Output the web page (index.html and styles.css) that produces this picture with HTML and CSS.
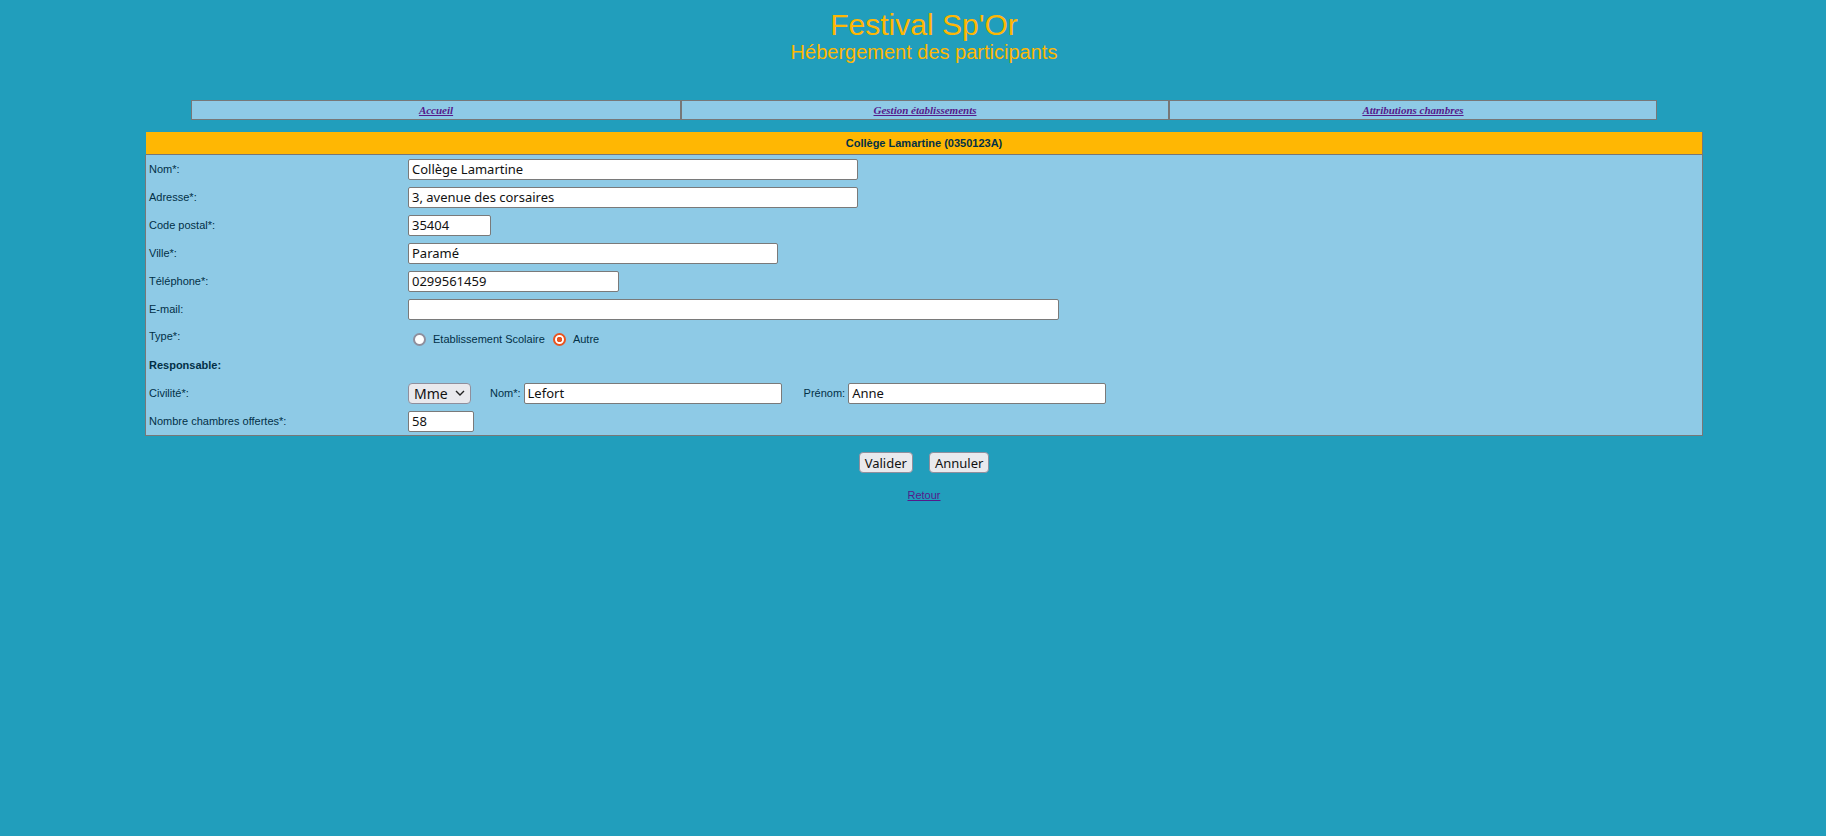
FILE: index.html
```html
<!DOCTYPE html>
<html lang="fr">
<head>
<meta charset="utf-8">
<title>Festival Sp'Or</title>
<link rel="stylesheet" href="styles.css">
</head>
<body>
<header class="site-head">
  <div class="site-title">Festival Sp'Or</div>
  <div class="site-sub">Hébergement des participants</div>
</header>
<nav class="menu">
  <div class="menu-cell"><a href="#">Accueil</a></div>
  <div class="menu-cell"><a href="#">Gestion établissements</a></div>
  <div class="menu-cell"><a href="#">Attributions chambres</a></div>
</nav>
<form class="card">
  <div class="card-head">Collège Lamartine (0350123A)</div>
  <div class="card-body">
    <div class="lbl">Nom*:</div>
    <div class="val"><input class="fld w-450" type="text" value="Collège Lamartine"></div>

    <div class="lbl">Adresse*:</div>
    <div class="val"><input class="fld w-450" type="text" value="3, avenue des corsaires"></div>

    <div class="lbl">Code postal*:</div>
    <div class="val"><input class="fld w-83" type="text" value="35404"></div>

    <div class="lbl">Ville*:</div>
    <div class="val"><input class="fld w-370" type="text" value="Paramé"></div>

    <div class="lbl">Téléphone*:</div>
    <div class="val"><input class="fld w-211" type="text" value="0299561459"></div>

    <div class="lbl">E-mail:</div>
    <div class="val"><input class="fld w-651" type="text" value=""></div>

    <div class="lbl lbl-up">Type*:</div>
    <div class="val radios">
      <input class="rad" type="radio" name="type" id="t1"><label class="rad-lbl" for="t1">Etablissement Scolaire</label>
      <input class="rad" type="radio" name="type" id="t2" checked><label class="rad-lbl" for="t2">Autre</label>
    </div>

    <div class="lbl bold">Responsable:</div>
    <div class="val"></div>

    <div class="lbl">Civilité*:</div>
    <div class="val inline">
      <div class="sel"><span>Mme</span><svg width="10" height="6" viewBox="0 0 10 6"><path d="M1 1 L5 5 L9 1" fill="none" stroke="#222" stroke-width="1.4"/></svg></div>
      <span class="in-lbl gap-nom">Nom*:</span><input class="fld w-258" type="text" value="Lefort">
      <span class="in-lbl gap-pre">Prénom:</span><input class="fld w-258" type="text" value="Anne">
    </div>

    <div class="lbl">Nombre chambres offertes*:</div>
    <div class="val"><input class="fld w-66" type="text" value="58"></div>
  </div>
  <div class="actions">
    <button type="button" class="btn">Valider</button>
    <button type="button" class="btn">Annuler</button>
  </div>
  <div class="back"><a href="#">Retour</a></div>
</form>
</body>
</html>
```
FILE: styles.css
```css
html, body {
  background: #219ebc;
}
body {
  margin: 8px 8px 8px 30px;
  font-family: "Liberation Sans", Arial, sans-serif;
  color: #023047;
}
.site-head {
  text-align: center;
  color: #ffb703;
}
.site-title {
  font-size: 30px;
  line-height: 33px;
}
.site-sub {
  font-size: 20px;
  line-height: 23px;
}
.menu {
  width: 1466px;
  margin: 36px auto 0;
  display: grid;
  grid-template-columns: 1fr 1fr 1fr;
  border: 1px solid #777;
  background: #8ecae6;
  box-sizing: border-box;
}
.menu-cell {
  height: 18px;
  display: flex;
  align-items: center;
  justify-content: center;
  border-left: 2px solid #777;
}
.menu-cell:first-child {
  border-left: none;
}
.menu-cell a {
  font-family: "Liberation Serif", "Times New Roman", serif;
  font-size: 11px;
  font-weight: bold;
  font-style: italic;
  color: #551a8b;
}
.card {
  width: 1558px;
  margin: 12px auto 0;
}
.card-head {
  margin-left: 1px;
  height: 22px;
  line-height: 22px;
  background: #ffb703;
  border-right: 1px solid #777;
  border-bottom: 1px solid #777;
  text-align: center;
  font-size: 11px;
  font-weight: bold;
  color: #023047;
}
.card-body {
  background: #8ecae6;
  border: 1px solid #777;
  border-top: none;
  display: grid;
  grid-template-columns: 262px 1fr;
  grid-auto-rows: 28px;
  align-items: center;
}
.lbl {
  padding-left: 3px;
  font-size: 11px;
}
.lbl-up {
  margin-top: -2px;
}
.bold {
  font-weight: bold;
}
.val {
  display: flex;
  align-items: center;
}
.fld {
  box-sizing: border-box;
  height: 21px;
  margin: 0;
  padding: 0 3px;
  border: 1px solid #7a7a7a;
  border-radius: 2px;
  background: #fff;
  font-family: "Noto Sans", "DejaVu Sans", sans-serif;
  font-size: 13px;
  color: #111;
  outline: none;
}
.w-450 { width: 450px; }
.w-83 { width: 83px; }
.w-370 { width: 370px; }
.w-211 { width: 211px; }
.w-651 { width: 651px; }
.w-258 { width: 258px; }
.w-66 { width: 66px; }
.radios {
  padding-top: 4px;
}
.rad {
  appearance: none;
  -webkit-appearance: none;
  box-sizing: border-box;
  width: 13px;
  height: 13px;
  margin: 0 0 0 5px;
  border: 2px solid #8f8f9d;
  border-radius: 50%;
  background: #fff;
}
.rad:checked {
  border-color: #e95420;
  background: radial-gradient(circle, #e95420 0 2.5px, #fff 3px);
}
.rad + .rad-lbl {
  margin-left: 7px;
}
.rad-lbl {
  font-size: 11px;
  margin-right: 2px;
}
.rad-lbl + .rad {
  margin-left: 6px;
}
.sel {
  box-sizing: border-box;
  width: 63px;
  height: 21px;
  padding: 0 5px 0 5px;
  display: flex;
  align-items: center;
  justify-content: space-between;
  border: 1px solid #8f8f9d;
  border-radius: 4px;
  background: #e9e9ed;
  font-family: "Noto Sans", "DejaVu Sans", sans-serif;
  font-size: 14px;
  color: #111;
}
.in-lbl {
  font-size: 11px;
  margin-right: 3px;
}
.gap-nom {
  margin-left: 19px;
}
.gap-pre {
  margin-left: 22px;
}
.actions {
  display: flex;
  justify-content: center;
  gap: 16px;
  margin-top: 16px;
}
.btn {
  box-sizing: border-box;
  height: 21px;
  padding: 0 5px;
  border: 1px solid #8f8f9d;
  border-radius: 4px;
  background: #e9e9ed;
  font-family: "Noto Sans", "DejaVu Sans", sans-serif;
  font-size: 13px;
  color: #111;
}
.back {
  text-align: center;
  margin-top: 16px;
  font-size: 11px;
}
.back a {
  color: #551a8b;
}
```
